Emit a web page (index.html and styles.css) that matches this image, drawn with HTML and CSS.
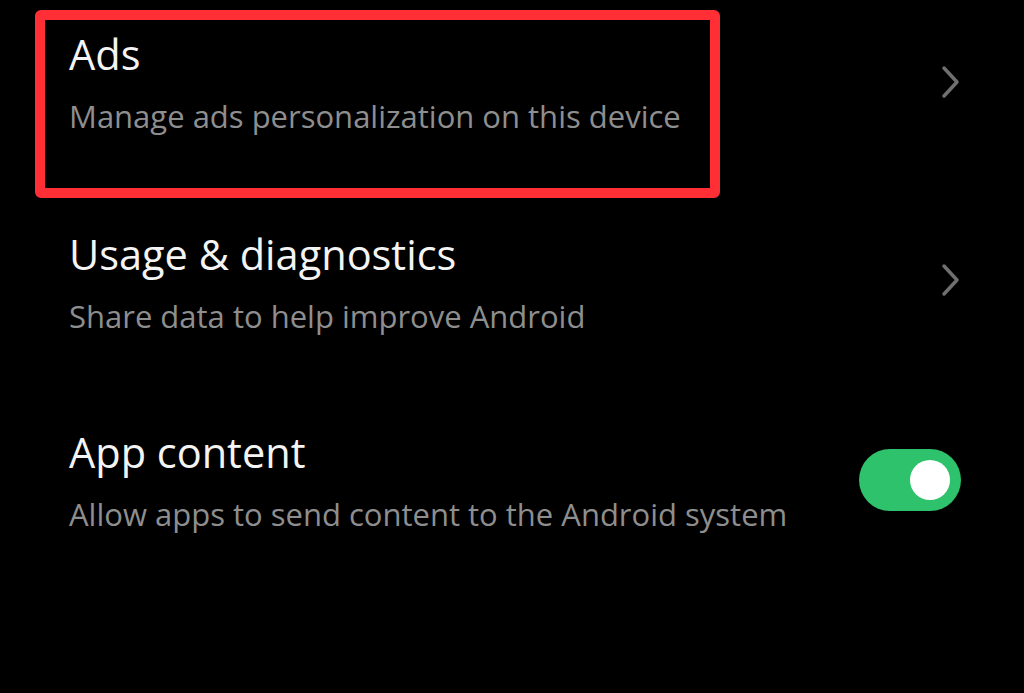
FILE: index.html
```html
<!DOCTYPE html>
<html lang="en">
<head>
  <meta charset="UTF-8">
  <meta name="viewport" content="width=device-width, initial-scale=1.0">
  <title>Privacy</title>
  <link rel="stylesheet" href="styles.css">
</head>
<body>
  <div class="settings-list">

    <div class="setting-row">
      <div class="setting-text marked">
        <div class="setting-title">Ads</div>
        <div class="setting-summary">Manage ads personalization on this device</div>
      </div>
      <svg class="chevron" width="22" height="34" viewBox="0 0 22 34">
        <polyline points="4,3 17,17 4,31" />
      </svg>
    </div>

    <div class="setting-row">
      <div class="setting-text">
        <div class="setting-title">Usage &amp; diagnostics</div>
        <div class="setting-summary">Share data to help improve Android</div>
      </div>
      <svg class="chevron" width="22" height="34" viewBox="0 0 22 34">
        <polyline points="4,3 17,17 4,31" />
      </svg>
    </div>

    <div class="setting-row">
      <div class="setting-text">
        <div class="setting-title">App content</div>
        <div class="setting-summary">Allow apps to send content to the Android system</div>
      </div>
      <div class="switch on"><div class="switch-knob"></div></div>
    </div>

  </div>
</body>
</html>
```

FILE: styles.css
```css
body {
  margin: 0;
  background-color: #000;
  color: #f2f2f2;
  font-family: "Open Sans", sans-serif;
  height: 693px;
  overflow: hidden;
}
.settings-list {
  padding-top: 10px;
}
.setting-row {
  display: flex;
  align-items: center;
  justify-content: space-between;
  height: 198px;
  padding-right: 62px;
}
.setting-text {
  align-self: flex-start;
  padding: 18px 0 0 69px;
}
/* red outline around the highlighted entry */
.setting-text.marked {
  box-sizing: border-box;
  width: 685px;
  height: 188px;
  margin-left: 35px;
  padding: 6px 0 0 24px;
  border: 10px solid #ff2f35;
  border-radius: 6px;
}
.setting-title {
  font-size: 41.5px;
  line-height: 56px;
  color: #f4f4f4;
}
.setting-summary {
  font-size: 31px;
  line-height: 44px;
  color: #8e8e8e;
  margin-top: 12px;
}
.chevron {
  margin-top: -54px;
}
.chevron polyline {
  fill: none;
  stroke: #6f6f6f;
  stroke-width: 3.5;
  stroke-linecap: round;
  stroke-linejoin: round;
}
.switch {
  width: 102px;
  height: 62px;
  border-radius: 31px;
  background-color: #2dc26b;
  position: relative;
  margin-right: 1px;
  margin-top: -50px;
}
.switch-knob {
  position: absolute;
  top: 11px;
  right: 11px;
  width: 40px;
  height: 40px;
  border-radius: 50%;
  background-color: #fff;
}
```
